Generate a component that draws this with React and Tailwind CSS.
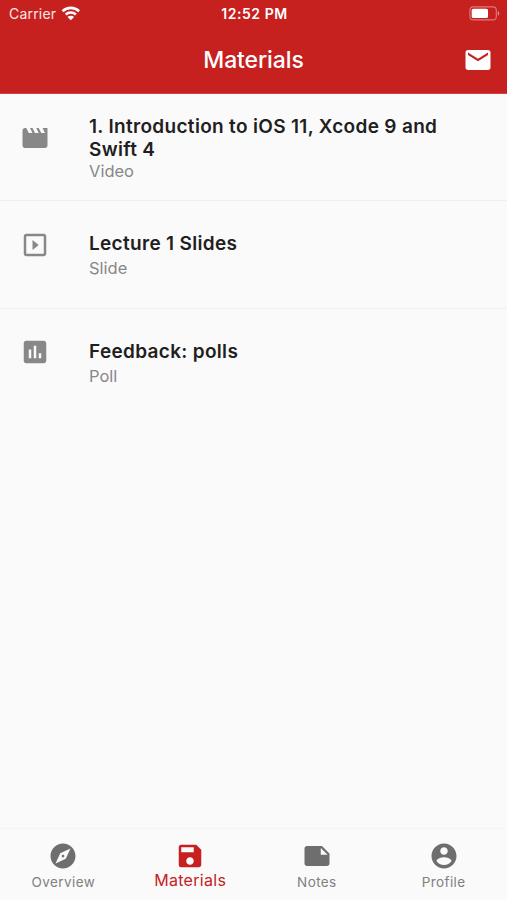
import React from 'react';
import {
  MdMovie,
  MdSlideshow,
  MdAssessment,
  MdExplore,
  MdSave,
  MdNote,
  MdEmail,
} from 'react-icons/md';

const AccountIcon = ({ className }) => (
  <svg viewBox="0 0 24 24" fill="currentColor" className={className}>
    <path d="M12 2C6.48 2 2 6.48 2 12s4.48 10 10 10 10-4.48 10-10S17.52 2 12 2zm0 3c1.66 0 3 1.34 3 3s-1.34 3-3 3-3-1.34-3-3 1.34-3 3-3zm0 14.2c-2.5 0-4.71-1.28-6-3.22.03-1.99 4-3.08 6-3.08 1.99 0 5.97 1.09 6 3.08-1.29 1.94-3.5 3.22-6 3.22z" />
  </svg>
);

const WifiIcon = () => (
  <svg viewBox="0 0 20 15" className="w-5 h-[15px]" fill="none" stroke="currentColor" strokeWidth="2.6">
    <path d="M1.5 5.2C6.3 0.8 13.3 0.8 18.1 5.2" />
    <path d="M4.7 8.5C7.6 5.9 12 5.9 14.9 8.5" />
    <path d="M9.8 14.2L6.5 10.9C8.4 9.3 11.2 9.3 13.1 10.9Z" fill="currentColor" stroke="none" />
  </svg>
);

const BatteryIcon = () => (
  <svg viewBox="0 0 31 15" className="w-[31px] h-[15px]">
    <rect x="0.9" y="0.9" width="26.4" height="13" rx="3.4" fill="none" stroke="white" strokeOpacity="0.4" strokeWidth="1.1" />
    <rect x="2.7" y="2.7" width="16.3" height="9.4" rx="1.6" fill="white" />
    <path d="M28.8 5v4.8c1.9-.8 1.9-4 0-4.8z" fill="white" fillOpacity="0.5" />
  </svg>
);

const materials = [
  { title: '1. Introduction to iOS 11, Xcode 9 and Swift 4', type: 'Video', Icon: MdMovie, spacing: 'pt-[21px]', gap: '-mt-px' },
  { title: 'Lecture 1 Slides', type: 'Slide', Icon: MdSlideshow, spacing: 'pt-[31px]', gap: 'mt-[2px]' },
  { title: 'Feedback: polls', type: 'Poll', Icon: MdAssessment, spacing: 'pt-[31px]', gap: 'mt-[2px]' },
];

const tabs = [
  { label: 'Overview', Icon: MdExplore },
  { label: 'Materials', Icon: MdSave, active: true },
  { label: 'Notes', Icon: MdNote },
  { label: 'Profile', Icon: AccountIcon },
];

const App = () => {
  return (
    <div className="flex flex-col w-[507px] h-[900px] overflow-hidden bg-[#fafafa] font-['Inter',sans-serif]">
      {/* Status bar and title */}
      <header className="h-[94px] shrink-0 bg-[#c6201f] text-white border-b border-[#d24443]">
        <div className="grid grid-cols-3 items-center h-[27px] pl-[9px] pr-[7px]">
          <div className="flex items-center gap-[5px]">
            <span className="text-[14px] tracking-[0.2px] text-white/90">Carrier</span>
            <WifiIcon />
          </div>
          <span className="text-center text-[14px] font-semibold tracking-[0.55px] whitespace-nowrap">12:52 PM</span>
          <div className="flex justify-end">
            <BatteryIcon />
          </div>
        </div>
        <div className="grid grid-cols-[1fr_auto_1fr] items-center h-[66px] px-[14px]">
          <span />
          <h1 className="text-[23px] font-medium tracking-[-0.1px]">Materials</h1>
          <MdEmail className="justify-self-end w-[30px] h-[30px]" />
        </div>
      </header>

      {/* Material list */}
      <main className="flex-1">
        {materials.map(({ title, type, Icon, spacing, gap }) => (
          <div
            key={title}
            className="flex h-[107.5px] first:h-[107px] border-b border-[#efefef] last:border-b-0"
          >
            <div className="w-[89px] shrink-0 pl-5 pt-[28.5px]">
              <Icon className="w-[30px] h-[30px] text-[#888888]" />
            </div>
            <div className={`w-[370px] ${spacing}`}>
              <h2 className="text-[19px] leading-[23px] font-semibold tracking-[0.32px] text-[#1f1f1f]">{title}</h2>
              <p className={`text-[16.5px] leading-[22px] text-[#888888] ${gap}`}>{type}</p>
            </div>
          </div>
        ))}
      </main>

      {/* Bottom tabs */}
      <nav className="grid grid-cols-4 h-[72px] shrink-0 border-t border-[#f5f5f5]">
        {tabs.map(({ label, Icon, active }) => (
          <div
            key={label}
            className={`flex flex-col items-center pt-[12px] ${active ? 'text-[#c6201f]' : 'text-[#6e6e6e]'}`}
          >
            <Icon className="w-[30px] h-[30px]" />
            <span
              className={
                active
                  ? 'text-[16px] leading-[18px] tracking-[0.3px]'
                  : 'text-[13.5px] leading-[22px] tracking-[0.4px] text-[#808080]'
              }
            >
              {label}
            </span>
          </div>
        ))}
      </nav>
    </div>
  );
};

export default App;
